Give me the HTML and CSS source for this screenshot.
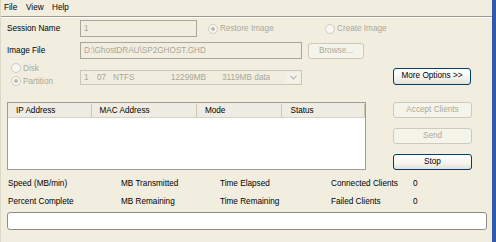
FILE: index.html
```html
<!DOCTYPE html>
<html>
<head>
<meta charset="utf-8">
<link rel="stylesheet" href="styles.css">
</head>
<body>
<div class="window">
  <div class="panel">
    <div class="menubar">
      <span class="menu m-file">File</span>
      <span class="menu m-view">View</span>
      <span class="menu">Help</span>
    </div>
    <div class="main">
      <div class="row row1">
        <span class="label">Session Name</span>
        <div class="field f-session">1</div>
        <span class="radio r-restore"><span class="dot on"></span>Restore Image</span>
        <span class="radio r-create"><span class="dot"></span>Create Image</span>
      </div>
      <div class="row row2">
        <span class="label">Image File</span>
        <div class="field f-image">D:\GhostDRAU\SP2GHOST.GHD</div>
        <button class="btn disabled b-browse">Browse...</button>
      </div>
      <div class="row row3">
        <div class="radios">
          <span class="radio"><span class="dot"></span>Disk</span>
          <span class="radio"><span class="dot on"></span>Partition</span>
        </div>
        <div class="select">
          <span class="c1">1</span><span class="c2">07</span><span class="c3">NTFS</span><span class="c4">12299MB</span><span class="c5">3119MB data</span>
          <span class="arrow"><svg width="7" height="5" viewBox="0 0 7 5"><path d="M0.5 0.8 L3.5 3.8 L6.5 0.8" fill="none" stroke="#B9B7AC" stroke-width="1.2"/></svg></span>
        </div>
        <button class="btn b-more">More Options &gt;&gt;</button>
      </div>
      <div class="row row4">
        <div class="list">
          <div class="list-head">
            <span class="col col-ip">IP Address</span>
            <span class="col col-mac">MAC Address</span>
            <span class="col col-mode">Mode</span>
            <span class="col col-status">Status</span>
          </div>
          <div class="list-body"></div>
        </div>
        <div class="side">
          <button class="btn disabled b-side">Accept Clients</button>
          <button class="btn disabled b-side">Send</button>
          <button class="btn b-side b-stop">Stop</button>
        </div>
      </div>
      <div class="stats">
        <span>Speed (MB/min)</span><span>MB Transmitted</span><span>Time Elapsed</span><span>Connected Clients</span><span>0</span>
        <span>Percent Complete</span><span>MB Remaining</span><span>Time Remaining</span><span>Failed Clients</span><span>0</span>
      </div>
      <div class="progress"></div>
    </div>
  </div>
  <div class="frame"></div>
</div>
</body>
</html>
```

FILE: styles.css
```css
* { box-sizing: border-box; }
html, body { margin: 0; padding: 0; }
body {
  width: 496px;
  height: 242px;
  overflow: hidden;
  background: #F1EEE0;
  font-family: "Liberation Sans", Arial, sans-serif;
  font-size: 8.2px;
  color: #000;
}
.window { display: flex; width: 496px; height: 242px; }
.panel { width: 492px; height: 242px; border-left: 1px solid #DCD9C9; }
.frame { width: 4px; height: 242px; background: #3059AC; }

.menubar {
  height: 17px;
  display: flex;
  align-items: center;
  padding-left: 3px;
  padding-bottom: 2px;
  border-bottom: 1px solid #9C9A8C;
  box-shadow: 0 1px 0 #FFFFFF;
}
.menu { display: inline-block; }
.m-file { width: 22px; }
.m-view { width: 26px; }

.main { padding: 3px 0 0 6px; }
.row { display: flex; align-items: center; }
.label { width: 73px; }

.field {
  height: 17px;
  border: 1px solid #A9A79A;
  background: #F1EEE0;
  color: #A8A698;
  padding: 0 0 0 3px;
  line-height: 15px;
  white-space: nowrap;
}
.f-session { width: 117px; }
.f-image { width: 222px; }

.radio { display: inline-flex; align-items: center; color: #ACA899; }
.dot {
  width: 10px; height: 10px;
  border-radius: 50%;
  border: 1px solid #CFCDC0;
  background: #F7F6F0;
  margin-right: 2px;
  display: inline-flex;
  align-items: center;
  justify-content: center;
}
.dot.on::after {
  content: "";
  width: 4px; height: 4px;
  border-radius: 50%;
  background: #BDBBAE;
}
.r-restore { margin-left: 11px; width: 117px; }
.r-create { }

.row1 { height: 17px; }
.row2 { height: 17px; margin-top: 5px; }

.btn {
  font: inherit;
  padding: 0;
  margin: 0;
  border: 1px solid #003C74;
  border-radius: 3px;
  background: linear-gradient(#FFFFFF, #F4F3EE 60%, #E3E1D6);
  color: #000;
  text-align: center;
  line-height: 1;
}
.btn.disabled {
  border-color: #CCCABD;
  background: #F5F4EA;
  color: #ACA899;
}
.b-browse { width: 56px; height: 16px; margin-left: 6px; margin-top: 1px; }

.row3 { height: 26px; margin-top: 4px; align-items: flex-start; }
.radios { width: 73px; display: flex; flex-direction: column; padding-left: 4px; padding-top: 0; gap: 3px; }
.select {
  position: relative;
  width: 222px;
  height: 15px;
  margin-top: 7px;
  border: 1px solid #C9C7BA;
  color: #A8A698;
  display: flex;
  align-items: center;
  white-space: nowrap;
  padding-left: 3px;
}
.select span { display: inline-block; }
.c1 { width: 13px; }
.c2 { width: 16px; }
.c3 { width: 58px; }
.c4 { width: 51px; }
.c5 { width: 64px; }
.arrow {
  position: absolute;
  right: 1px; top: 1px;
  width: 14px; height: 11px;
  display: flex !important;
  align-items: center;
  justify-content: center;
  background: #F3F2EA;
}
.b-more { width: 78px; height: 17px; margin-left: 91px; margin-top: 5px; }

.row4 { height: 68px; margin-top: 13px; align-items: flex-start; }
.list {
  width: 359px;
  height: 68px;
  border: 1px solid #9C9C94;
  background: #FFFFFF;
  display: flex;
  flex-direction: column;
}
.list-head {
  height: 15px;
  display: flex;
  background: #EFEDE3;
  border-bottom: 1px solid #D6D3C5;
}
.col {
  display: flex; align-items: center;
  padding-left: 8px;
  border-right: 1px solid #CAC7B8;
  height: 13px;
  margin-top: 1px;
}
.col-ip { width: 84px; }
.col-mac { width: 106px; }
.col-mode { width: 86px; }
.col-status { width: 83px; }
.list-body { flex: 1; }

.side { display: flex; flex-direction: column; margin-left: 27px; }
.b-side { width: 79px; height: 16px; }
.b-side + .b-side { margin-top: 10px; }
.b-stop { height: 16px; margin-top: 10px !important; }

.stats {
  display: grid;
  grid-template-columns: 113px 99px 111px 82px 20px;
  grid-auto-rows: 18px;
  margin-top: 4px;
  padding-left: 1px;
  align-items: center;
}

.progress {
  width: 480px;
  height: 18px;
  margin-top: 2px;
  border: 1px solid #8F8E86;
  border-radius: 3px;
  background: #FFFFFF;
}
```
